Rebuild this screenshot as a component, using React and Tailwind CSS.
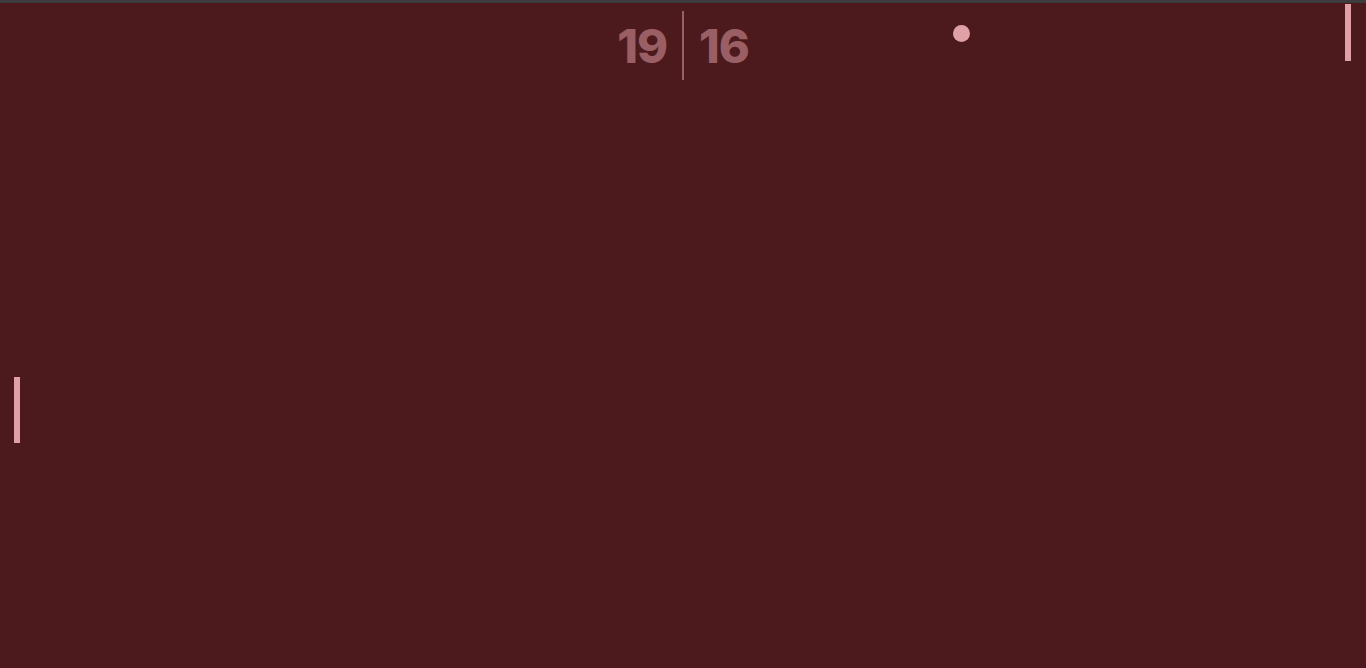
export default function App() {
  const left = { score: 19, y: 374 };
  const right = { score: 16, y: 1 };
  const ball = { x: 961, y: 30 };

  return (
    <div className="w-screen h-screen overflow-hidden bg-[#3c3c3c] pt-[3px] flex flex-col">
      {/* play field */}
      <div className="relative flex-1 bg-[#4c1a1d] overflow-hidden">
        {/* scoreboard */}
        <div className="flex justify-center items-center gap-[15px] pt-[8px] font-['Inter',sans-serif] font-extrabold text-[47px] leading-none tracking-[-1px] text-[#9a5f64]">
          <span>{left.score}</span>
          <div className="w-[2px] h-[69px] bg-[#9a5f64] shrink-0"></div>
          <span>{right.score}</span>
        </div>

        {/* paddles */}
        <div className="absolute left-[14px] w-[6px] h-[66px] bg-[#e0a1a6]" style={{ top: left.y }}></div>
        <div className="absolute left-[1345px] w-[6px] h-[57px] bg-[#e0a1a6]" style={{ top: right.y }}></div>

        {/* ball */}
        <div className="absolute w-[17px] h-[17px] rounded-full bg-[#e0a1a6] -ml-[8px] -mt-[8px]" style={{ left: ball.x, top: ball.y }}></div>
      </div>
    </div>
  );
}
